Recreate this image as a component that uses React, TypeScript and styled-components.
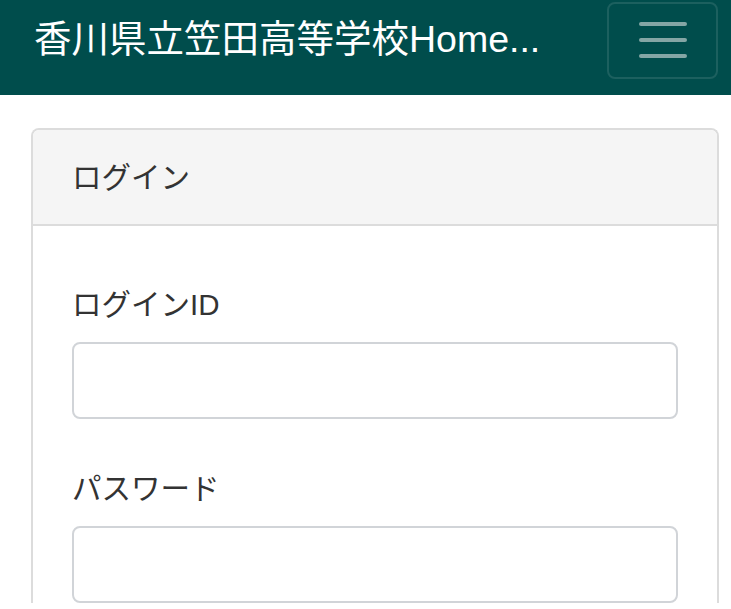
import React from "react";
import styled, { createGlobalStyle } from "styled-components";

const Global = createGlobalStyle`
  html, body { margin: 0; padding: 0; background: #ffffff; }
  body {
    font-family: "Liberation Sans", "Noto Sans CJK JP", sans-serif;
    color: #333333;
  }
  * { box-sizing: border-box; }
`;

const Navbar = styled.header`
  height: 95px;
  background: #004d4c;
  display: flex;
  align-items: center;
  justify-content: space-between;
  padding: 1px 13px 16px 34px;
`;

const Brand = styled.a`
  color: #ffffff;
  font-size: 37.5px;
  line-height: 1;
  white-space: nowrap;
  text-decoration: none;
  letter-spacing: 0;
`;

const Toggle = styled.button`
  width: 111px;
  height: 77px;
  border: 2px solid #1c605f;
  border-radius: 8px;
  background: transparent;
  display: flex;
  flex-direction: column;
  align-items: center;
  justify-content: center;
  gap: 12px;
  padding: 0;
`;

const Bar = styled.span`
  display: block;
  width: 48px;
  height: 4px;
  border-radius: 2px;
  background: #84a6a5;
`;

const Main = styled.main`
  padding: 33px 12px 0 31px;
`;

const Card = styled.section`
  border: 2px solid #dcdcdc;
  border-bottom: none;
  border-radius: 8px 8px 0 0;
  overflow: hidden;
`;

const CardHeader = styled.div`
  background: #f5f5f5;
  border-bottom: 2px solid #dcdcdc;
  padding: 27px 39px 25px;
  font-size: 29.5px;
  line-height: 42px;
  color: #333333;
`;

const CardBody = styled.div`
  padding: 58px 39px 0 39px;
  display: flex;
  flex-direction: column;
  gap: 49px;
`;

const Field = styled.div`
  display: flex;
  flex-direction: column;
  gap: 16px;
`;

const Label = styled.label`
  font-size: 29.5px;
  line-height: 42px;
  color: #333333;
`;

const Input = styled.input`
  height: 77px;
  width: 100%;
  border: 2px solid #d1d4d8;
  border-radius: 8px;
  background: #ffffff;
  font-size: 28px;
  padding: 0 20px;
  outline: none;
`;

export default function App() {
  return (
    <>
      <Global />
      <Navbar>
        <Brand href="#">香川県立笠田高等学校Home...</Brand>
        <Toggle aria-label="menu">
          <Bar />
          <Bar />
          <Bar />
        </Toggle>
      </Navbar>
      <Main>
        <Card>
          <CardHeader>ログイン</CardHeader>
          <CardBody>
            <Field>
              <Label htmlFor="login-id">ログインID</Label>
              <Input id="login-id" type="text" />
            </Field>
            <Field>
              <Label htmlFor="password">パスワード</Label>
              <Input id="password" type="password" />
            </Field>
          </CardBody>
        </Card>
      </Main>
    </>
  );
}
